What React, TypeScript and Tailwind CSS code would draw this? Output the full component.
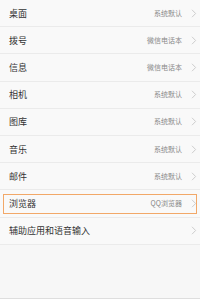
import React from "react";

const rows: { label: string; value: string; highlight?: boolean }[] = [
  { label: "桌面", value: "系统默认" },
  { label: "拨号", value: "微信电话本" },
  { label: "信息", value: "微信电话本" },
  { label: "相机", value: "系统默认" },
  { label: "图库", value: "系统默认" },
  { label: "音乐", value: "系统默认" },
  { label: "邮件", value: "系统默认" },
  { label: "浏览器", value: "QQ浏览器", highlight: true },
  { label: "辅助应用和语音输入", value: "" },
];

function Chevron() {
  return (
    <svg width="6" height="9" viewBox="0 0 6 9" className="shrink-0">
      <path d="M1 0.8 L4.6 4.5 L1 8.2" fill="none" stroke="#c8c8c8" strokeWidth="0.9" />
    </svg>
  );
}

export default function App() {
  return (
    <div
      className="w-[200px] h-[299px] bg-[#f7f7f7] flex flex-col border-b border-[#dedede] overflow-hidden"
      style={{ fontFamily: '"Noto Sans CJK SC", "Noto Sans", sans-serif' }}
    >
      {rows.map((r) => (
        <div
          key={r.label}
          className="h-[27.2px] shrink-0 border-b border-[#ebebeb] bg-[#f9f9f9] relative flex items-center pl-[9px] pr-[3px]"
        >
          <span className="text-[9px] leading-none text-[#333333] flex-1">{r.label}</span>
          {r.value && (
            <span className="text-[7px] leading-none text-[#8a8a8a] mr-[9px]">{r.value}</span>
          )}
          <Chevron />
          {r.highlight && (
            <div className="absolute left-[3px] right-[3px] top-[3.5px] bottom-[2.5px] border-[1.5px] border-[#f2a868]" />
          )}
        </div>
      ))}
    </div>
  );
}
